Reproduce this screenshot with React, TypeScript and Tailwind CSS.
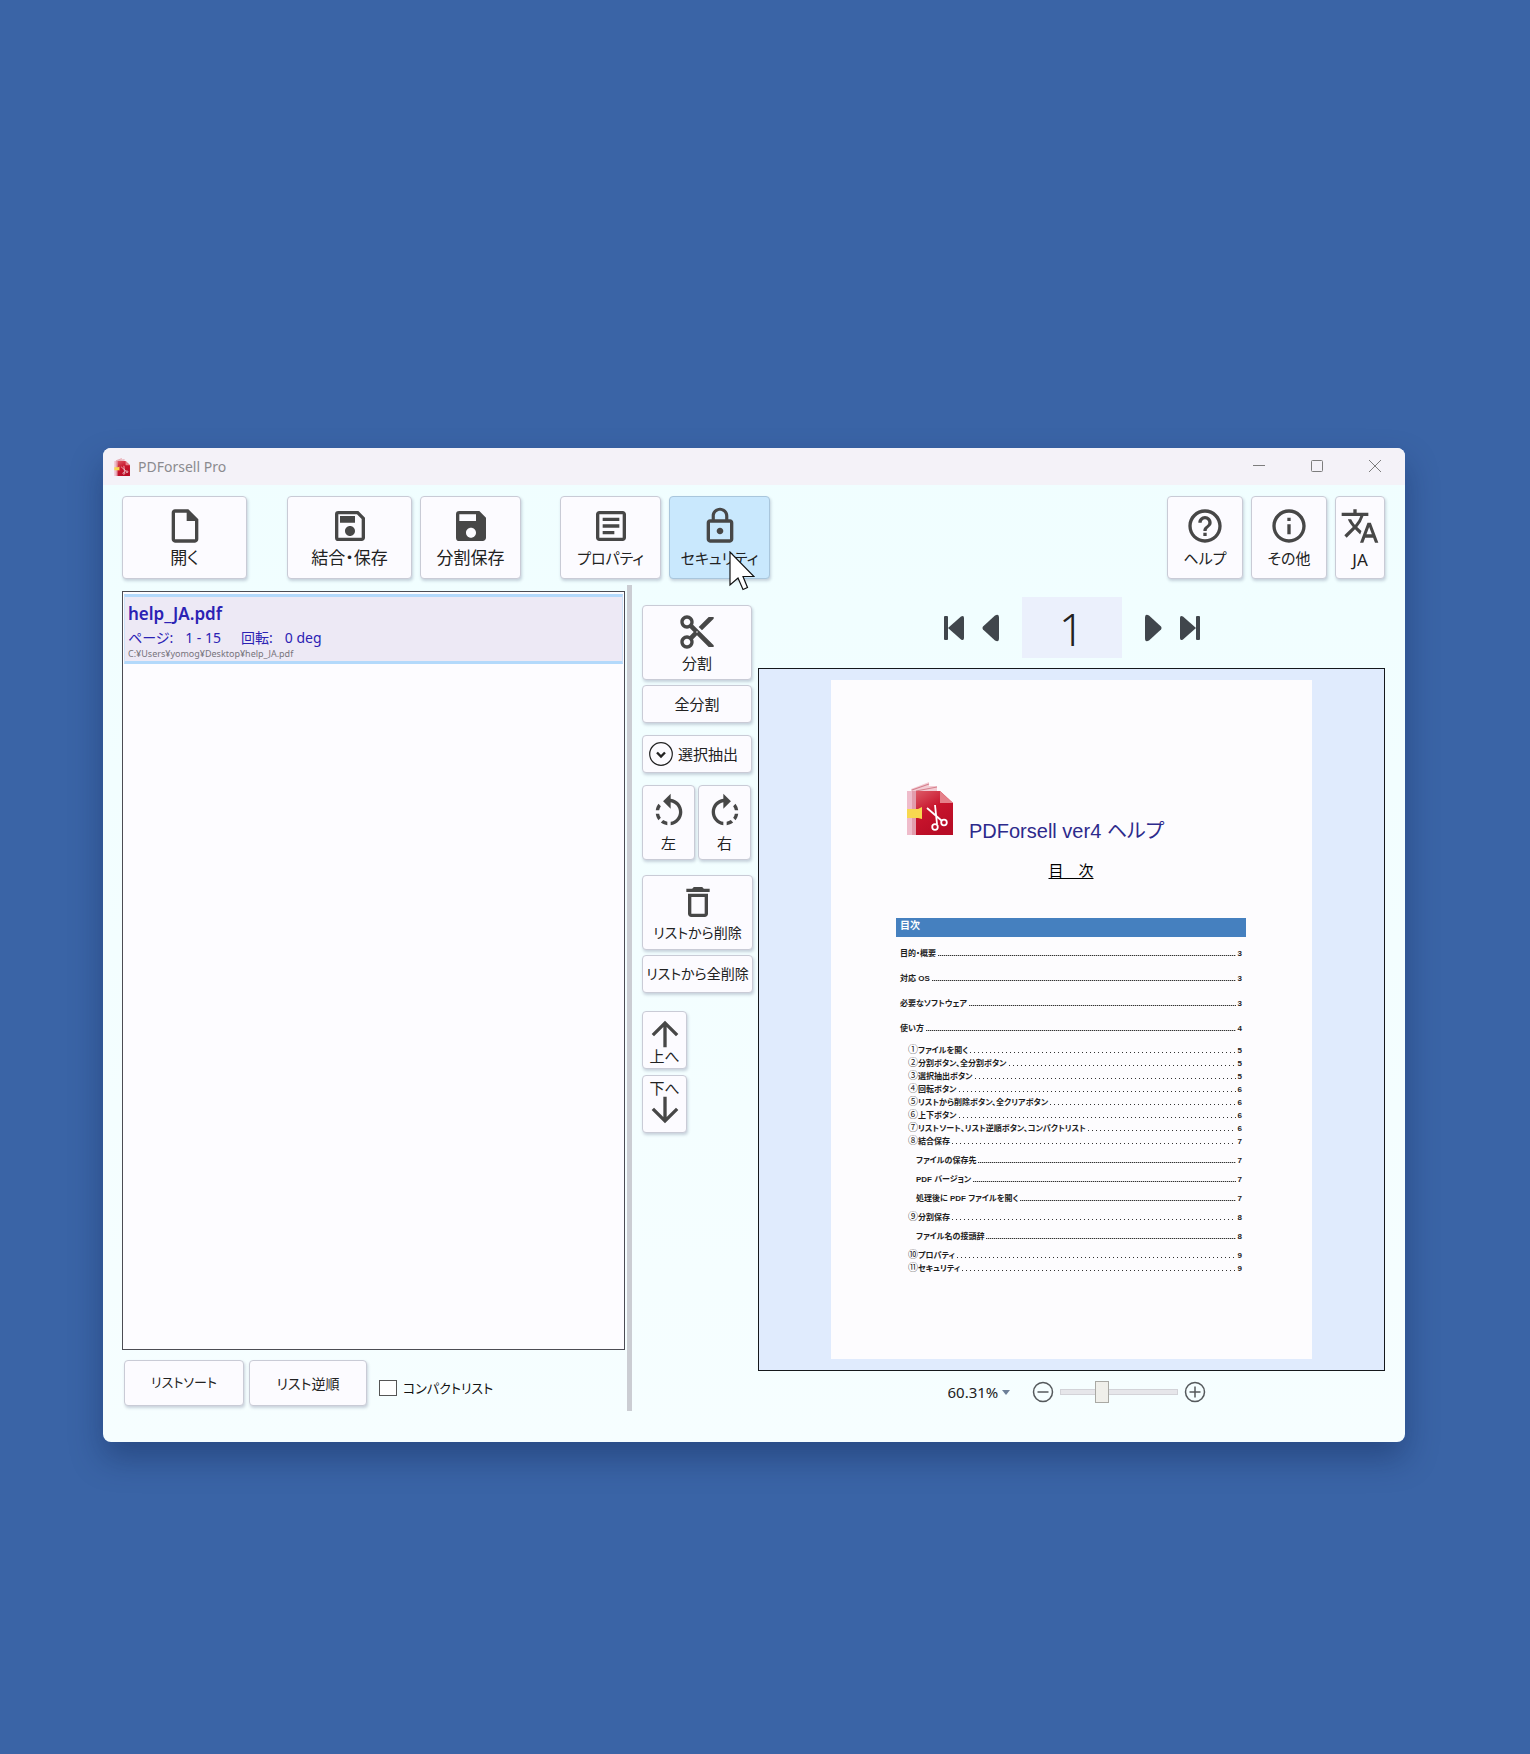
import { useState } from "react";
import type { ReactNode } from "react";
import clsx from "clsx";
import {
  MdArrowDownward,
  MdArrowUpward,
  MdContentCut,
  MdDeleteOutline,
  MdHelpOutline,
  MdInfoOutline,
  MdLockOutline,
  MdOutlineArticle,
  MdOutlineInsertDriveFile,
  MdOutlineSave,
  MdRotateLeft,
  MdRotateRight,
  MdSave,
  MdTranslate,
} from "react-icons/md";

type TocEntry = { mark?: string; title: string; page: number };
type TocGroup = { level: 1 | 2 | 3; entries: TocEntry[] };

const TOC: TocGroup[] = [
  {
    level: 1,
    entries: [
      { title: "目的・概要", page: 3 },
      { title: "対応 OS", page: 3 },
      { title: "必要なソフトウェア", page: 3 },
      { title: "使い方", page: 4 },
    ],
  },
  {
    level: 2,
    entries: [
      { mark: "①", title: "ファイルを開く", page: 5 },
      { mark: "②", title: "分割ボタン、全分割ボタン", page: 5 },
      { mark: "③", title: "選択抽出ボタン", page: 5 },
      { mark: "④", title: "回転ボタン", page: 6 },
      { mark: "⑤", title: "リストから削除ボタン、全クリアボタン", page: 6 },
      { mark: "⑥", title: "上下ボタン", page: 6 },
      { mark: "⑦", title: "リストソート、リスト逆順ボタン、コンパクトリスト", page: 6 },
      { mark: "⑧", title: "結合保存", page: 7 },
    ],
  },
  {
    level: 3,
    entries: [
      { title: "ファイルの保存先", page: 7 },
      { title: "PDF バージョン", page: 7 },
      { title: "処理後に PDF ファイルを開く", page: 7 },
    ],
  },
  { level: 2, entries: [{ mark: "⑨", title: "分割保存", page: 8 }] },
  { level: 3, entries: [{ title: "ファイル名の接頭辞", page: 8 }] },
  {
    level: 2,
    entries: [
      { mark: "⑩", title: "プロパティ", page: 9 },
      { mark: "⑪", title: "セキュリティ", page: 9 },
    ],
  },
];

const BUTTON_FRAME = "flex shrink-0 items-center rounded-[4px] border text-[#222] shadow-[1px_2px_3px_rgba(60,70,110,0.24)]";
const BUTTON = clsx(BUTTON_FRAME, "border-[#c9cbd6] bg-[#fcfbff]");

function ToolButton({
  icon,
  label,
  className,
  small = false,
  active = false,
}: {
  icon: ReactNode;
  label: string;
  className?: string;
  small?: boolean;
  active?: boolean;
}) {
  return (
    <button
      type="button"
      className={clsx(
        active ? clsx(BUTTON_FRAME, "border-[#a9c6dc] bg-[#c9e8fd]") : BUTTON,
        "h-[83px] flex-col pt-[9px] leading-6 whitespace-nowrap",
        small ? "text-[15px]" : "text-[17px]",
        className,
      )}
    >
      <span className="text-[40px] text-[#474747]">{icon}</span>
      {label}
    </button>
  );
}

function SideButton({
  icon,
  label,
  className,
  small = false,
}: {
  icon?: ReactNode;
  label: string;
  className?: string;
  small?: boolean;
}) {
  return (
    <button
      type="button"
      className={clsx(
        BUTTON,
        "whitespace-nowrap",
        small ? "text-[14px] leading-[22px]" : "text-[15px] leading-[22px]",
        icon ? "h-[75px] flex-col pt-1.5" : "h-[38px] justify-center",
        className,
      )}
    >
      {icon && <span className="text-[40px] text-[#474747]">{icon}</span>}
      {label}
    </button>
  );
}

function Logo({ className }: { className?: string }) {
  return (
    <svg className={className} viewBox="0 0 47 53" aria-hidden="true">
      <defs>
        <linearGradient id="cover" x1="0" y1="0" x2="0.5" y2="1">
          <stop offset="0" stopColor="#dd5a66" />
          <stop offset="0.5" stopColor="#c8142c" />
          <stop offset="1" stopColor="#b80d26" />
        </linearGradient>
      </defs>
      <path d="M5 7 L23 0 V4 L31 4 V10 L5 10 Z" fill="#f3ccd4" />
      <path d="M6 8 L23 2 M10 9 L31 5" stroke="#d5808d" strokeWidth="1.200" />
      <path d="M1 9 H10 V53 H1 Z" fill="#efbccb" />
      <path d="M6 9 H10 V53 H6 Z" fill="#e29dac" />
      <path d="M10 9 H34 L47 21 V53 H10 Z" fill="url(#cover)" />
      <path d="M34 9 V21 H47 Z" fill="#e5808a" />
      <path d="M1 27 H12 L16 25 V37 L12 36 H1 Z" fill="#f8d850" />
      <g fill="none" stroke="#fff" strokeWidth="1.8">
        <path d="M21 26 L36 39 M29 23 L31 42" />
        <circle cx="38" cy="40.500" r="2.800" />
        <circle cx="29" cy="45" r="2.800" />
      </g>
    </svg>
  );
}

function WindowControls() {
  const icon = "h-3 w-3";
  return (
    <div className="flex items-center gap-[46px] pb-px text-[#7d7d7d]">
      <button type="button" aria-label="最小化">
        <svg className={icon} viewBox="0 0 12 12" stroke="currentColor" fill="none">
          <path d="M0 5.500h12" />
        </svg>
      </button>
      <button type="button" aria-label="最大化">
        <svg className={icon} viewBox="0 0 12 12" stroke="currentColor" fill="none">
          <rect x="0.500" y="0.500" width="11" height="11" rx="1" />
        </svg>
      </button>
      <button type="button" aria-label="閉じる">
        <svg className={icon} viewBox="0 0 12 12" stroke="currentColor" fill="none">
          <path d="M0 0l12 12M12 0L0 12" />
        </svg>
      </button>
    </div>
  );
}

function Toolbar() {
  return (
    <div className="flex justify-between pt-[11px]">
      <div className="flex gap-2">
        <ToolButton className="mr-8 w-[125px]" icon={<MdOutlineInsertDriveFile />} label="開く" />
        <ToolButton className="w-[125px]" icon={<MdOutlineSave />} label="結合・保存" />
        <ToolButton className="mr-[31px] w-[101px]" icon={<MdSave />} label="分割保存" />
        <ToolButton className="w-[101px]" icon={<MdOutlineArticle />} label="プロパティ" small />
        <div className="relative">
          <ToolButton className="w-[101px]" icon={<MdLockOutline />} label="セキュリティ" small active />
          {/* mouse pointer */}
          <svg className="absolute top-[55px] left-[60px] h-[40px] w-[26px]" viewBox="0 0 26 40" aria-hidden="true">
            <path
              d="M1 1 V34 L9 27 L14 38.500 L18.500 36.500 L14 25.500 H25 Z"
              fill="#fff"
              stroke="#111"
              strokeWidth="1.200"
            />
          </svg>
        </div>
      </div>
      <div className="flex gap-2">
        <ToolButton className="w-[76px]" icon={<MdHelpOutline />} label="ヘルプ" small />
        <ToolButton className="w-[76px]" icon={<MdInfoOutline />} label="その他" small />
        <ToolButton className="w-[50px] gap-0.5" icon={<MdTranslate />} label="JA" />
      </div>
    </div>
  );
}

function FilePane() {
  const [compact, setCompact] = useState(false);

  return (
    <section className="flex w-[503px] shrink-0 flex-col pt-1.5">
      <ul className="flex-1 border border-[#4c4c54] bg-[#fdfcff] px-px py-0.5">
        <li className="h-[70px] border-x border-y-[3px] border-x-[#cfe3f8] border-y-[#b3d9fb] bg-[#ede9f5] pt-[5px] pl-[3px] text-[#2b22b4]">
          <p className="text-[17px] leading-6 font-semibold">help_JA.pdf</p>
          <p className="flex gap-5 text-[14px] leading-6">
            <span>
              ページ:<span className="ml-3">1 - 15</span>
            </span>
            <span>
              回転:<span className="ml-3">0 deg</span>
            </span>
          </p>
          <p className="text-[9px] leading-2 text-[#77747c]">C:¥Users¥yomog¥Desktop¥help_JA.pdf</p>
        </li>
      </ul>
      <div className="flex h-[61px] items-start pt-2.5 pl-0.5">
        <button type="button" className={clsx(BUTTON, "mr-[5px] h-[46px] w-[120px] justify-center text-[13px]")}>
          リストソート
        </button>
        <button type="button" className={clsx(BUTTON, "h-[46px] w-[118px] justify-center text-[14px]")}>
          リスト逆順
        </button>
        <label className="ml-3 flex items-center gap-1.5 pt-4 text-[13px] leading-6 text-[#111]">
          <input
            type="checkbox"
            checked={compact}
            onChange={(e) => setCompact(e.target.checked)}
            className="h-4 w-[18px] appearance-none border border-[#555] bg-white checked:bg-[#2b22b4]"
          />
          コンパクトリスト
        </label>
      </div>
    </section>
  );
}

function SidePane() {
  return (
    <section className="flex w-[111px] shrink-0 flex-col items-start pt-5">
      <SideButton className="w-[110px]" icon={<MdContentCut />} label="分割" />
      <SideButton className="mt-[5px] w-[110px]" label="全分割" />
      <button type="button" className={clsx(BUTTON, "mt-3 h-[38px] w-[110px] gap-[5px] pl-1.5 text-[15px]")}>
        <svg className="h-6 w-6" viewBox="0 0 24 24" fill="none" stroke="#222" aria-hidden="true">
          <circle cx="12" cy="12" r="11.300" strokeWidth="1.200" />
          <path d="M8 10.500l4 4 4-4" strokeWidth="2.400" />
        </svg>
        選択抽出
      </button>
      <div className="mt-3 flex gap-[3px]">
        <SideButton className="w-[53px]" icon={<MdRotateLeft />} label="左" />
        <SideButton className="w-[53px]" icon={<MdRotateRight />} label="右" />
      </div>
      <SideButton className="mt-[15px] w-[111px]" icon={<MdDeleteOutline />} label="リストから削除" small />
      <SideButton className="mt-[5px] w-[111px]" label="リストから全削除" small />
      <button
        type="button"
        className={clsx(BUTTON, "mt-[18px] h-[58px] w-[45px] flex-col pt-0.5 text-[15px] leading-4")}
      >
        <MdArrowUpward className="h-10 w-10 shrink-0 text-[#474747]" />
        <span className="-mt-1.5">上へ</span>
      </button>
      <button type="button" className={clsx(BUTTON, "mt-1.5 h-[58px] w-[45px] flex-col pt-1 text-[15px] leading-4")}>
        <span>下へ</span>
        <MdArrowDownward className="-mt-1.5 h-10 w-10 shrink-0 text-[#474747]" />
      </button>
    </section>
  );
}

function PageNav() {
  const [page, setPage] = useState("1");
  const arrow = "h-7 w-[22px]";

  return (
    <div className="flex items-center justify-center pt-3 pb-2.5 text-[#40464c]">
      <button type="button" aria-label="最初のページ" className="mr-4">
        <svg className={arrow} viewBox="0 0 22 28" fill="currentColor">
          <rect x="1" y="2" width="4" height="24" rx="1" />
          <path d="M5 14 L18 2.500 Q21 1 21 4 V24 Q21 27 18 25.500 Z" />
        </svg>
      </button>
      <button type="button" aria-label="前のページ" className="mr-[19px]">
        <svg className={arrow} viewBox="0 0 22 28" fill="currentColor">
          <path d="M2 12.500 L14 1.500 Q18 -1 18 4 V24 Q18 29 14 26.500 L2 15.500 Q1 14 2 12.500 Z" />
        </svg>
      </button>
      <input
        aria-label="ページ番号"
        value={page}
        onChange={(e) => setPage(e.target.value)}
        className="h-[61px] w-[100px] bg-[#ebf0fc] pt-0.5 text-center text-[44px] font-light text-[#222]"
      />
      <button type="button" aria-label="次のページ" className="ml-[19px]">
        <svg className={arrow} viewBox="0 0 22 28" fill="currentColor">
          <path d="M20 12.500 L8 1.500 Q4 -1 4 4 V24 Q4 29 8 26.500 L20 15.500 Q21 14 20 12.500 Z" />
        </svg>
      </button>
      <button type="button" aria-label="最後のページ" className="ml-4">
        <svg className={arrow} viewBox="0 0 22 28" fill="currentColor">
          <rect x="17" y="2" width="4" height="24" rx="1" />
          <path d="M17 14 L4 2.500 Q1 1 1 4 V24 Q1 27 4 25.500 Z" />
        </svg>
      </button>
    </div>
  );
}

function TocRow({ entry, level }: { entry: TocEntry; level: 1 | 2 | 3 }) {
  return (
    <li>
      <a
        href={`#page-${entry.page}`}
        className={clsx(
          "flex items-center gap-0.5 pr-1 pl-1",
          level === 1 && "h-[25px]",
          level === 2 && "ml-2 h-[13px]",
          level === 3 && "ml-4 h-[19px]",
        )}
      >
        <span>
          {entry.mark && <span className="text-[10px] font-normal">{entry.mark}</span>}
          {entry.title}
        </span>
        <span
          className={clsx(
            "mt-1 h-px flex-1",
            level === 2
              ? "bg-[repeating-linear-gradient(90deg,#333_0_1px,transparent_1px_4px)]"
              : "bg-[repeating-linear-gradient(90deg,#333_0_1px,#bbb_1px_2px)]",
          )}
        />
        <span>{entry.page}</span>
      </a>
    </li>
  );
}

function DocumentPage() {
  return (
    <article className="w-[481px] bg-[#fdfcfe] pt-[102px] pr-[66px] pb-[84px] pl-[65px] font-['Liberation_Sans','Noto_Sans_CJK_JP',sans-serif]">
      <header className="flex items-end gap-4 pl-2.5">
        <Logo className="h-[53px] w-[47px]" />
        <h1 className="-mb-2 text-[20px] leading-6 whitespace-nowrap text-[#2d2a8c]">PDForsell ver4 ヘルプ</h1>
      </header>
      <p className="mt-6 text-center text-[15px] leading-6 whitespace-pre text-black underline underline-offset-2">
        目　次
      </p>
      <h2 className="mt-[35px] h-[19px] bg-[#4580bf] pl-1 text-[10px] leading-4 font-bold text-white">目次</h2>
      <div className="flex flex-col gap-[3px] pt-1 text-[8px] leading-3 font-bold whitespace-nowrap text-[#1d1d1d]">
        {TOC.map((group, i) => (
          <ul key={i}>
            {group.entries.map((entry) => (
              <TocRow key={entry.title} entry={entry} level={group.level} />
            ))}
          </ul>
        ))}
      </div>
    </article>
  );
}

function ZoomBar() {
  const [zoom, setZoom] = useState(34);

  return (
    <div className="flex h-10 items-center justify-center pt-0.5 pl-2.5 text-[#222]">
      <div className="relative mr-5 flex items-center">
        <select aria-label="表示倍率" className="w-[64px] appearance-none bg-transparent text-[15px] leading-6">
          <option>60.31%</option>
        </select>
        <span className="pointer-events-none absolute right-0.5 border-x-4 border-t-[5px] border-x-transparent border-t-[#6d7f98]" />
      </div>
      <button type="button" aria-label="縮小">
        <svg className="h-[22px] w-[22px]" viewBox="0 0 22 22" fill="none" stroke="#55595c" strokeWidth="1.500">
          <circle cx="11" cy="11" r="9.500" />
          <path d="M5.500 11h11" />
        </svg>
      </button>
      <input
        type="range"
        aria-label="ズーム"
        min={0}
        max={100}
        value={zoom}
        onChange={(e) => setZoom(Number(e.target.value))}
        className="mx-1.5 h-[22px] w-[118px] appearance-none bg-transparent [&::-webkit-slider-runnable-track]:h-[6px] [&::-webkit-slider-runnable-track]:border [&::-webkit-slider-runnable-track]:border-[#d3d3d8] [&::-webkit-slider-runnable-track]:bg-[#e6e6ea] [&::-webkit-slider-thumb]:-mt-[9px] [&::-webkit-slider-thumb]:h-[22px] [&::-webkit-slider-thumb]:w-[14px] [&::-webkit-slider-thumb]:appearance-none [&::-webkit-slider-thumb]:border [&::-webkit-slider-thumb]:border-[#a9a9a4] [&::-webkit-slider-thumb]:bg-[#efefea]"
      />
      <button type="button" aria-label="拡大">
        <svg className="h-[22px] w-[22px]" viewBox="0 0 22 22" fill="none" stroke="#55595c" strokeWidth="1.500">
          <circle cx="11" cy="11" r="9.500" />
          <path d="M5.500 11h11M11 5.500v11" />
        </svg>
      </button>
    </div>
  );
}

export default function App() {
  return (
    <div className="min-h-screen bg-[#3a64a6] pt-[448px] pr-[125px] pb-[312px] pl-[103px] font-['Noto_Sans','Noto_Sans_CJK_JP',sans-serif] [font-feature-settings:'palt']">
      <main className="overflow-clip rounded-lg bg-linear-to-b from-[#f0feff] to-[#f6feff] shadow-[0_16px_32px_rgba(10,25,70,0.35)]">
        <div className="flex h-[37px] items-center justify-between bg-[#f4f2f8] pr-6 pl-[11px]">
          <div className="flex items-center gap-2 text-[14px] leading-6 text-[#8b8b8f]">
            <Logo className="h-[18px] w-4" />
            PDForsell Pro
          </div>
          <WindowControls />
        </div>
        <div className="pr-5 pb-[31px] pl-[19px]">
          <Toolbar />
          <div className="mt-1.5 flex">
            <FilePane />
            <div className="mr-2.5 ml-0.5 w-[5px] shrink-0 bg-[#cbcdd3]" />
            <SidePane />
            <section className="ml-[5px] flex min-w-0 flex-1 flex-col">
              <PageNav />
              <div className="flex justify-center border border-[#15181c] bg-[#e0ebfd] py-[11px]">
                <DocumentPage />
              </div>
              <ZoomBar />
            </section>
          </div>
        </div>
      </main>
    </div>
  );
}
